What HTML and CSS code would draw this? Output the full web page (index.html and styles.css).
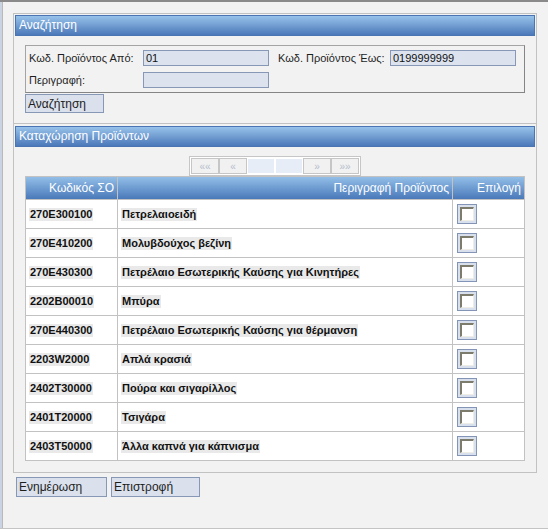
FILE: index.html
```html
<!DOCTYPE html>
<html lang="el">
<head>
<meta charset="utf-8">
<title>Καταχώρηση Προϊόντων</title>
<link rel="stylesheet" href="styles.css">
</head>
<body>
<div class="page">
  <section class="panel panel-search">
    <div class="panel-head">Αναζήτηση</div>
    <div class="criteria">
      <label class="lbl">Κωδ. Προϊόντος Από:</label>
      <div class="inp">01</div>
      <label class="lbl lbl2">Κωδ. Προϊόντος Έως:</label>
      <div class="inp">0199999999</div>
      <label class="lbl">Περιγραφή:</label>
      <div class="inp"></div>
    </div>
    <button class="btn btn-search">Αναζήτηση</button>
  </section>
  <section class="panel panel-list">
    <div class="panel-head">Καταχώρηση Προϊόντων</div>
    <div class="pager-wrap">
      <div class="pager">
        <span class="pg pg-arrow">««</span>
        <span class="pg pg-arrow">«</span>
        <span class="pg pg-blank"></span>
        <span class="pg pg-blank"></span>
        <span class="pg pg-arrow">»</span>
        <span class="pg pg-arrow">»»</span>
      </div>
    </div>
    <div class="grid">
      <div class="th">Κωδικός ΣΟ</div>
      <div class="th">Περιγραφή Προϊόντος</div>
      <div class="th">Επιλογή</div>

      <div class="td"><span class="hl">270E300100</span></div>
      <div class="td"><span class="hl">Πετρελαιοειδή</span></div>
      <div class="td"><span class="cb"><span class="cb-in"></span></span></div>

      <div class="td"><span class="hl">270E410200</span></div>
      <div class="td"><span class="hl">Μολυβδούχος βεζίνη</span></div>
      <div class="td"><span class="cb"><span class="cb-in"></span></span></div>

      <div class="td"><span class="hl">270E430300</span></div>
      <div class="td"><span class="hl">Πετρέλαιο Εσωτερικής Καύσης για Κινητήρες</span></div>
      <div class="td"><span class="cb"><span class="cb-in"></span></span></div>

      <div class="td"><span class="hl">2202B00010</span></div>
      <div class="td"><span class="hl">Μπύρα</span></div>
      <div class="td"><span class="cb"><span class="cb-in"></span></span></div>

      <div class="td"><span class="hl">270E440300</span></div>
      <div class="td"><span class="hl">Πετρέλαιο Εσωτερικής Καύσης για θέρμανση</span></div>
      <div class="td"><span class="cb"><span class="cb-in"></span></span></div>

      <div class="td"><span class="hl">2203W2000</span></div>
      <div class="td"><span class="hl">Απλά κρασιά</span></div>
      <div class="td"><span class="cb"><span class="cb-in"></span></span></div>

      <div class="td"><span class="hl">2402T30000</span></div>
      <div class="td"><span class="hl">Πούρα και σιγαρίλλος</span></div>
      <div class="td"><span class="cb"><span class="cb-in"></span></span></div>

      <div class="td"><span class="hl">2401T20000</span></div>
      <div class="td"><span class="hl">Τσιγάρα</span></div>
      <div class="td"><span class="cb"><span class="cb-in"></span></span></div>

      <div class="td"><span class="hl">2403T50000</span></div>
      <div class="td"><span class="hl">Άλλα καπνά για κάπνισμα</span></div>
      <div class="td"><span class="cb"><span class="cb-in"></span></span></div>
    </div>
  </section>
  <div class="actions">
    <button class="btn btn-update">Ενημέρωση</button>
    <button class="btn btn-back">Επιστροφή</button>
  </div>
</div>
</body>
</html>
```
FILE: styles.css
```css
* { box-sizing: border-box; }
html, body { margin: 0; padding: 0; }
body {
  font-family: "Liberation Sans", Arial, sans-serif;
  color: #1e1e1e;
  background: #f2f2f2;
}
.page {
  width: 548px;
  height: 529px;
  background: #f2f2f2;
  border-top: 2px solid #8a8a8a;
  border-bottom: 1px solid #c4c4c4;
  box-shadow: inset 2px 0 #c9d3e2, inset 3px 0 #b9b9b9;
  padding: 11px 11px 0 13px;
}
.panel {
  width: 524px;
  border: 1px solid #c2c2c2;
  padding: 1px;
}
.panel-search {
  padding-bottom: 0;
}
.panel-list {
  border-top: none;
  padding-top: 2px;
  padding-bottom: 11px;
}
.panel-head {
  height: 21px;
  border: 1px solid #4a74b2;
  background: linear-gradient(#97c2ea, #4b78b9);
  color: #fff;
  font-size: 12px;
  line-height: 19px;
  padding-left: 3px;
}
.criteria {
  margin: 9px 10px 0;
  height: 48px;
  border: 1px solid #a4a4a4;
  border-right-color: #858585;
  border-bottom-color: #858585;
  padding: 4px 0 0 3px;
  display: grid;
  grid-template-columns: 114px 126px 121px 126px;
  grid-auto-rows: 16px;
  row-gap: 6px;
  align-items: center;
}
.lbl {
  font-size: 11px;
  color: #1e1e1e;
  white-space: nowrap;
}
.lbl2 { padding-left: 9px; }
.inp {
  height: 16px;
  background: #dce3ef;
  border: 1px solid #8797b6;
  font-size: 11px;
  line-height: 14px;
  padding-left: 2px;
  color: #111;
}
.btn {
  font-family: "Liberation Sans", Arial, sans-serif;
  font-size: 12px;
  color: #1e1e1e;
  background: #dae1ed;
  border: 1px solid #8797b6;
  text-align: left;
  padding: 0 0 0 2px;
  margin: 0;
  line-height: 16px;
  display: block;
}
.btn-search {
  width: 79px;
  height: 19px;
  margin: 1px 0 10px 10px;
}
.pager-wrap {
  display: flex;
  justify-content: center;
  margin-top: 9px;
}
.pager {
  display: flex;
  border: 1px solid #c6c6c6;
  background: #fff;
  padding: 1px;
}
.pg {
  width: 28px;
  height: 16px;
  display: flex;
  align-items: center;
  justify-content: center;
  font-size: 10px;
  color: #b5bdcc;
}
.pg-arrow {
  background: #f1f1f1;
  border: 1px solid #c6c6c6;
}
.pg-blank {
  background: #e6edf7;
  border: 1px solid #fff;
}
.grid {
  margin: 0 10px;
  width: 500px;
  display: grid;
  grid-template-columns: 91px 334px 71px;
  grid-template-rows: 22px repeat(9, 28px);
  gap: 1px;
  background: #c2c2c2;
  border: 1px solid #c2c2c2;
}
.th {
  background: linear-gradient(#92bee7, #4a79ba);
  color: #fff;
  font-size: 12px;
  text-align: right;
  padding-right: 3px;
  line-height: 22px;
  white-space: nowrap;
}
.td {
  background: #fff;
  display: flex;
  align-items: center;
  padding-left: 3px;
}
.hl {
  background: #e9e9e9;
  font-size: 11px;
  font-weight: bold;
  color: #111;
  padding: 0 1px;
  line-height: 13px;
  white-space: nowrap;
}
.cb {
  width: 20px;
  height: 20px;
  margin-left: 1px;
  border: 1px solid #8494b6;
  background: #d9e0ed;
  padding: 2px;
  display: block;
}
.cb-in {
  display: block;
  width: 14px;
  height: 14px;
  background: #fff;
  border-top: 2px solid #7d7b6c;
  border-left: 2px solid #7d7b6c;
  border-right: 1px solid #efeee6;
  border-bottom: 1px solid #efeee6;
}
.actions {
  display: flex;
  gap: 4px;
  margin: 4px 0 0 3px;
}
.btn-update {
  width: 91px;
  height: 20px;
}
.btn-back {
  width: 89px;
  height: 20px;
}
```
